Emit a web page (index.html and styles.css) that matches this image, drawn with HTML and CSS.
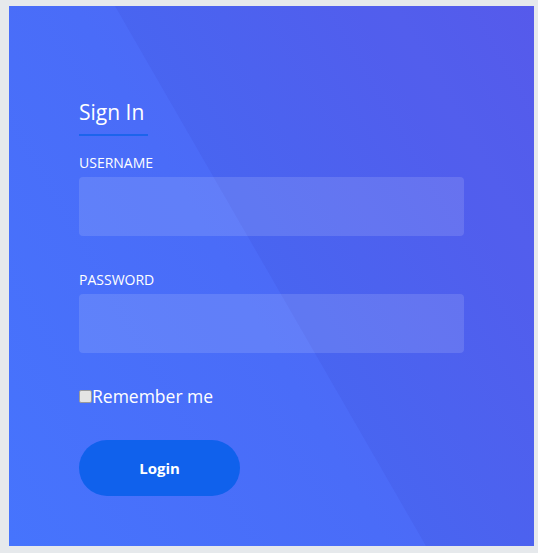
FILE: index.html
```html
<!DOCTYPE html>
<html>
<head>
<meta charset="utf-8">
<link rel="stylesheet" href="styles.css">
</head>
<body>
<div class="card">
  <div class="shade"></div>
  <form class="form">
    <h1 class="title">Sign In</h1>
    <label class="label">USERNAME</label>
    <div class="input"></div>
    <label class="label pw">PASSWORD</label>
    <div class="input"></div>
    <label class="remember"><input type="checkbox" class="check">Remember me</label>
    <button type="button" class="btn">Login</button>
  </form>
</div>
</body>
</html>
```

FILE: styles.css
```css
html, body {
  margin: 0;
  padding: 0;
  background: #e6e9ec;
}
body {
  padding: 6px 4px 7px 9px;
  font-family: "Open Sans", Lato, sans-serif;
}
.card {
  position: relative;
  width: 525px;
  height: 540px;
  background: linear-gradient(60deg, #4674fd 0%, #4a6cf8 45%, #5a5ff2 100%);
  overflow: hidden;
}
.shade {
  position: absolute;
  inset: 0;
  background: rgba(40, 30, 160, 0.07);
  clip-path: polygon(106px 0, 525px 0, 525px 540px, 417px 540px);
}
.form {
  position: relative;
  padding: 92px 0 0 70px;
  width: 385px;
  display: flex;
  flex-direction: column;
  color: #fff;
}
.title {
  margin: 0;
  font-weight: 400;
  font-size: 21px;
  line-height: 28px;
  align-self: flex-start;
  padding-bottom: 8px;
  border-bottom: 2px solid #1c64ec;
  width: 69px;
  white-space: nowrap;
}
.label {
  font-size: 14px;
  line-height: 16px;
  margin-top: 19px;
  margin-bottom: 6px;
}
.label.pw {
  margin-top: 36px;
}
.input {
  height: 59px;
  border-radius: 4px;
  background: rgba(255, 255, 255, 0.13);
}
.remember {
  margin-top: 33px;
  display: flex;
  align-items: center;
  font-size: 17.5px;
  line-height: 20px;
}
.check {
  appearance: none;
  -webkit-appearance: none;
  margin: 0;
  width: 13px;
  height: 13px;
  box-sizing: border-box;
  border: 1px solid #9a9a9a;
  border-radius: 2px;
  background: #e4e4e4;
}
.btn {
  margin-top: 34px;
  width: 161px;
  height: 56px;
  border: none;
  border-radius: 28px;
  background: #1061ec;
  color: #fff;
  font-family: "Open Sans", sans-serif;
  font-weight: 700;
  font-size: 15px;
}
```
